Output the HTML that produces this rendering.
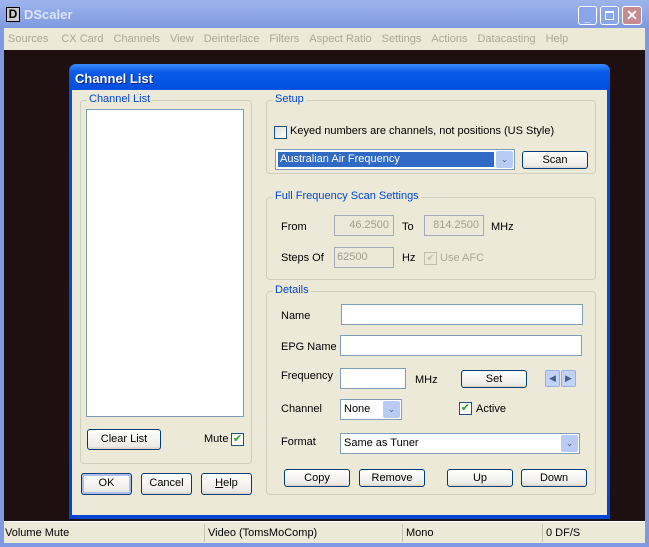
<html><head><style>
*{box-sizing:border-box;margin:0;padding:0}
body{width:649px;height:547px;overflow:hidden;background:#7f9ae0;font-family:Tahoma,"Liberation Sans",sans-serif;font-size:11px;position:relative}
.a{position:absolute}
.grp{position:absolute;border:1px solid #d0d0bf;border-radius:4px}
.gl{position:absolute;top:-8px;left:6px;background:#ece9d8;color:#0046d5;padding:0 2px;font-size:11px}
.btn{position:absolute;border:1px solid #003c74;border-radius:3px;background:linear-gradient(#fff,#ecebe6 85%,#d6d0c5);text-align:center;font-size:11px;line-height:19px;height:21px}
.ed{position:absolute;background:#fff;border:1px solid #7f9db9;height:21px}
.dis{position:absolute;border:1px solid #a5acb5;background:#ece9d8;color:#a0a090;text-align:right;padding-right:4px;height:21px;line-height:19px}
.cb{position:absolute;width:13px;height:13px;border:1px solid #1c5180;background:#fff}
.dd{position:absolute;right:1px;top:1px;width:17px;bottom:1px;background:#b8cbf4;border-radius:2px;color:#4d6185;text-align:center;font-size:9px;line-height:17px}
</style></head><body>
<div class="a" style="left:0;top:0;width:649px;height:28px;background:linear-gradient(#9db4ec,#7f9ae0)"></div>
<div class="a" style="left:6px;top:7px;width:14px;height:15px;background:#ccc;border:1px solid #000;font-weight:bold;font-size:12px;line-height:13px;text-align:center">D</div>
<div class="a" style="left:24px;top:7px;color:#dce4f8;font-weight:bold;font-size:13px">DScaler</div>
<div class="a" style="left:578px;top:6px;width:19px;height:19px;background:#8aa6ea;border:1px solid #fff;border-radius:3px;color:#fff;text-align:center;font-weight:bold;line-height:22px">_</div>
<div class="a" style="left:600px;top:6px;width:19px;height:19px;background:#8aa6ea;border:1px solid #fff;border-radius:3px"><div class="a" style="left:4px;top:4px;width:9px;height:9px;border:1px solid #fff;border-top-width:2px"></div></div>
<div class="a" style="left:622px;top:6px;width:20px;height:19px;background:#c68b91;border:1px solid #fff;border-radius:3px;color:#fff;text-align:center;font-weight:bold;font-size:14px;line-height:17px">✕</div>
<div class="a" style="left:4px;top:28px;width:641px;height:22px;background:#ece9d8;color:#aca899;font-size:11px;line-height:22px;white-space:nowrap;word-spacing:0">
<span style="margin-left:4px">Sources</span><span style="margin-left:13px">CX Card</span><span style="margin-left:10px">Channels</span><span style="margin-left:10px">View</span><span style="margin-left:10px">Deinterlace</span><span style="margin-left:10px">Filters</span><span style="margin-left:10px">Aspect Ratio</span><span style="margin-left:10px">Settings</span><span style="margin-left:10px">Actions</span><span style="margin-left:10px">Datacasting</span><span style="margin-left:10px">Help</span></div>
<div class="a" style="left:4px;top:50px;width:641px;height:471px;background:#1e1010"></div>
<div class="a" style="left:4px;top:521px;width:641px;height:22px;background:#ece9d8;border-top:1px solid #fff;line-height:22px">
<span class="a" style="left:1px">Volume Mute</span><span class="a" style="left:200px;border-left:1px solid #c5c2b2;padding-left:3px;height:18px;top:2px;line-height:18px">Video (TomsMoComp)</span>
<span class="a" style="left:398px;border-left:1px solid #c5c2b2;padding-left:3px;height:18px;top:2px;line-height:18px">Mono</span><span class="a" style="left:538px;border-left:1px solid #c5c2b2;padding-left:3px;height:18px;top:2px;line-height:18px">0 DF/S</span></div>
<!-- dialog -->
<div class="a" style="left:69px;top:64px;width:541px;height:455px;background:linear-gradient(#3a8cfb,#0a5ae8 8px,#0050e0 26px,#0046d5);border-radius:7px 7px 0 0"></div>
<div class="a" style="left:75px;top:71px;color:#fff;font-weight:bold;font-size:13px;text-shadow:1px 1px #0a1e7a">Channel List</div>
<div class="a" style="left:72px;top:90px;width:535px;height:425px;background:#ece9d8"></div>
<div class="grp" style="left:80px;top:100px;width:172px;height:364px"><span class="gl">Channel List</span></div>
<div class="a" style="left:86px;top:109px;width:158px;height:308px;background:#fff;border:1px solid #7f9db9"></div>
<div class="btn" style="left:87px;top:429px;width:74px">Clear List</div>
<div class="a" style="left:204px;top:433px">Mute</div>
<div class="cb" style="left:231px;top:433px;color:#21a121;font-size:11px;line-height:11px;text-align:center">✔</div>
<div class="btn" style="left:81px;top:473px;width:51px;height:22px;box-shadow:inset 0 0 0 2px #a8c0f0">OK</div>
<div class="btn" style="left:141px;top:473px;width:51px;height:22px">Cancel</div>
<div class="btn" style="left:201px;top:473px;width:51px;height:22px"><u>H</u>elp</div>

<div class="grp" style="left:266px;top:100px;width:330px;height:74px"><span class="gl">Setup</span></div>
<div class="cb" style="left:274px;top:126px;background:linear-gradient(135deg,#dcdcd6,#fff)"></div>
<div class="a" style="left:290px;top:125px">Keyed numbers are channels, not positions (US Style)</div>
<div class="ed" style="left:275px;top:149px;width:240px;padding:2px"><div style="background:#316ac5;color:#fff;height:15px;line-height:15px;padding-left:2px;width:216px">Australian Air Frequency</div><div class="dd">⌄</div></div>
<div class="btn" style="left:522px;top:151px;width:66px;height:18px;line-height:16px">Scan</div>

<div class="grp" style="left:266px;top:197px;width:330px;height:83px"><span class="gl">Full Frequency Scan Settings</span></div>
<div class="a" style="left:281px;top:221px">From</div>
<div class="dis" style="left:334px;top:215px;width:60px">46.2500</div>
<div class="a" style="left:402px;top:221px">To</div>
<div class="dis" style="left:424px;top:215px;width:60px">814.2500</div>
<div class="a" style="left:491px;top:221px">MHz</div>
<div class="a" style="left:281px;top:252px">Steps Of</div>
<div class="dis" style="left:334px;top:247px;width:60px;text-align:left;padding-left:2px">62500</div>
<div class="a" style="left:402px;top:252px">Hz</div>
<div class="cb" style="left:424px;top:252px;border-color:#c0c0b0;color:#c0c0b0;font-size:10px;line-height:11px;text-align:center;background:#ece9d8">✔</div>
<div class="a" style="left:440px;top:252px;color:#aca899">Use AFC</div>

<div class="grp" style="left:266px;top:291px;width:330px;height:204px"><span class="gl">Details</span></div>
<div class="a" style="left:281px;top:310px">Name</div>
<div class="ed" style="left:341px;top:304px;width:242px">&nbsp;</div>
<div class="a" style="left:281px;top:341px">EPG Name</div>
<div class="ed" style="left:340px;top:335px;width:242px">&nbsp;</div>
<div class="a" style="left:281px;top:370px">Frequency</div>
<div class="ed" style="left:340px;top:368px;width:66px">&nbsp;</div>
<div class="a" style="left:415px;top:374px">MHz</div>
<div class="btn" style="left:461px;top:370px;width:66px;height:18px;line-height:16px">Set</div>
<div class="a" style="left:545px;top:370px;width:15px;height:17px;background:#c1d3fb;border:1px solid #98b0e0;border-radius:2px;color:#4d6185;text-align:center;line-height:15px;font-size:9px">◀</div>
<div class="a" style="left:561px;top:370px;width:15px;height:17px;background:#c1d3fb;border:1px solid #98b0e0;border-radius:2px;color:#4d6185;text-align:center;line-height:15px;font-size:9px">▶</div>
<div class="a" style="left:281px;top:403px">Channel</div>
<div class="ed" style="left:340px;top:399px;width:62px;line-height:19px;padding-left:3px">None<div class="dd">⌄</div></div>
<div class="cb" style="left:459px;top:402px;color:#21a121;font-size:11px;line-height:11px;text-align:center">✔</div>
<div class="a" style="left:476px;top:403px">Active</div>
<div class="a" style="left:281px;top:436px">Format</div>
<div class="ed" style="left:340px;top:433px;width:240px;line-height:19px;padding-left:3px">Same as Tuner<div class="dd">⌄</div></div>
<div class="btn" style="left:284px;top:469px;width:66px;height:18px;line-height:16px">Copy</div>
<div class="btn" style="left:359px;top:469px;width:66px;height:18px;line-height:16px">Remove</div>
<div class="btn" style="left:447px;top:469px;width:66px;height:18px;line-height:16px">Up</div>
<div class="btn" style="left:521px;top:469px;width:66px;height:18px;line-height:16px">Down</div>
</body></html>
